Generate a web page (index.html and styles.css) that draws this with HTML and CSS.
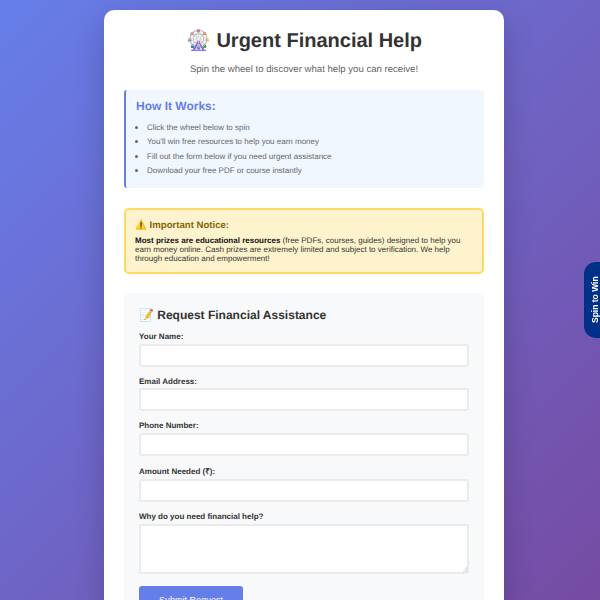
FILE: index.html
```html
<!DOCTYPE html>
<html lang="en">
<head>
<meta charset="utf-8">
<title>Urgent Financial Help</title>
<link rel="stylesheet" href="styles.css">
</head>
<body>
<main class="card">
  <h1 class="title">🎡 Urgent Financial Help</h1>
  <p class="subtitle">Spin the wheel to discover what help you can receive!</p>
  <section class="how">
    <h3 class="how-title">How It Works:</h3>
    <ul class="how-list">
      <li class="how-item">Click the wheel below to spin</li>
      <li class="how-item">You'll win free resources to help you earn money</li>
      <li class="how-item">Fill out the form below if you need urgent assistance</li>
      <li class="how-item">Download your free PDF or course instantly</li>
    </ul>
  </section>
  <section class="notice">
    <h4 class="notice-title">⚠️ Important Notice:</h4>
    <p class="notice-text"><strong class="notice-strong">Most prizes are educational resources</strong> (free PDFs, courses, guides) designed to help you earn money online. Cash prizes are extremely limited and subject to verification. We help through education and empowerment!</p>
  </section>
  <section class="form-box">
    <h2 class="form-title">📝 Request Financial Assistance</h2>
    <form>
      <div class="group"><label class="label" for="n">Your Name:</label><input class="field" id="n" type="text"></div>
      <div class="group"><label class="label" for="e">Email Address:</label><input class="field" id="e" type="email"></div>
      <div class="group"><label class="label" for="p">Phone Number:</label><input class="field" id="p" type="tel"></div>
      <div class="group"><label class="label" for="a">Amount Needed (₹):</label><input class="field" id="a" type="number"></div>
      <div class="group"><label class="label" for="w">Why do you need financial help?</label><textarea class="field area" id="w"></textarea></div>
      <button class="submit" type="button">Submit Request</button>
    </form>
  </section>
</main>
<button class="tab" type="button">Spin to Win</button>
</body>
</html>
```
FILE: styles.css
```css
* { box-sizing: border-box; }
html { height: 100%; }
body {
  margin: 0;
  padding: 10px 0 10px 8px;
  min-height: 100vh;
  font-family: "Liberation Sans", Arial, sans-serif;
  text-rendering: geometricPrecision;
  background: linear-gradient(135deg, #667eea 0%, #764ba2 100%) fixed;
  color: #333;
}
.card {
  width: 400px;
  margin: 0 auto;
  padding: 20px;
  background: #fff;
  border-radius: 10px;
  box-shadow: 0 10px 30px rgba(0,0,0,.2);
}
.title {
  margin: 0 0 11px;
  font-size: 20px;
  line-height: 23px;
  text-align: center;
  color: #333;
}
.subtitle {
  margin: 0 0 15px;
  font-size: 9.6px;
  line-height: 11px;
  text-align: center;
  color: #666;
}
.how {
  padding: 9px 10px 10px;
  margin-bottom: 20px;
  background: #f0f7ff;
  border-left: 2px solid #667eea;
  border-radius: 3px;
}
.how-title {
  margin: 0 0 7px;
  font-size: 12px;
  line-height: 14px;
  color: #667eea;
}
.how-list {
  margin: 0;
  padding-left: 11px;
  font-size: 8px;
  line-height: 14.4px;
  color: #666;
}
.how-item { height: 14.4px; }
.how-item::marker { font-size: 9px; }
.notice {
  padding: 10px 9px 9px;
  margin-bottom: 19px;
  background: #fff3cd;
  border: 2px solid #ffd966;
  border-radius: 5px;
}
.notice-title {
  margin: 0 0 4px;
  font-size: 9.6px;
  line-height: 12px;
  color: #856404;
}
.notice-text {
  margin: 0;
  font-size: 8px;
  line-height: 9px;
  color: #333;
}
.notice-strong { color: #111; }
.form-box {
  padding: 15px;
  background: #f8f9fa;
  border-radius: 5px;
}
.form-title {
  margin: 0 0 10px;
  font-size: 12px;
  line-height: 14px;
  color: #333;
}
.group { margin-bottom: 9.6px; }
.label {
  display: block;
  padding-top: 0.4px;
  margin-bottom: 2.6px;
  font-size: 8px;
  font-weight: 700;
  color: #333;
}
.field {
  display: block;
  width: 100%;
  height: 23px;
  padding: 5px;
  border: 2px solid #ebebeb;
  border-radius: 3px;
  background: #fff;
  font-family: inherit;
}
.area { height: 50px; }
.area::-webkit-resizer {
  background: linear-gradient(135deg, transparent 50%, #d8d8d8 50%, #d8d8d8 65%, transparent 65%, transparent 78%, #d8d8d8 78%) no-repeat right bottom / 5px 5px;
}
.submit {
  display: block;
  width: 104px;
  height: 28px;
  margin-top: 12px;
  padding: 0;
  border: 0;
  border-radius: 3px;
  background: #667eea;
  color: #fff;
  font-family: inherit;
  font-size: 9px;
}
.tab {
  position: fixed;
  right: 0;
  top: 262px;
  width: 16px;
  height: 76px;
  padding: 0 6px 0 0;
  border: 0;
  border-radius: 0 12px 12px 0;
  background: #003087;
  color: #fff;
  font-family: inherit;
  font-size: 8.5px;
  font-weight: 700;
  writing-mode: vertical-rl;
  transform: rotate(180deg);
  text-align: center;
}
```
